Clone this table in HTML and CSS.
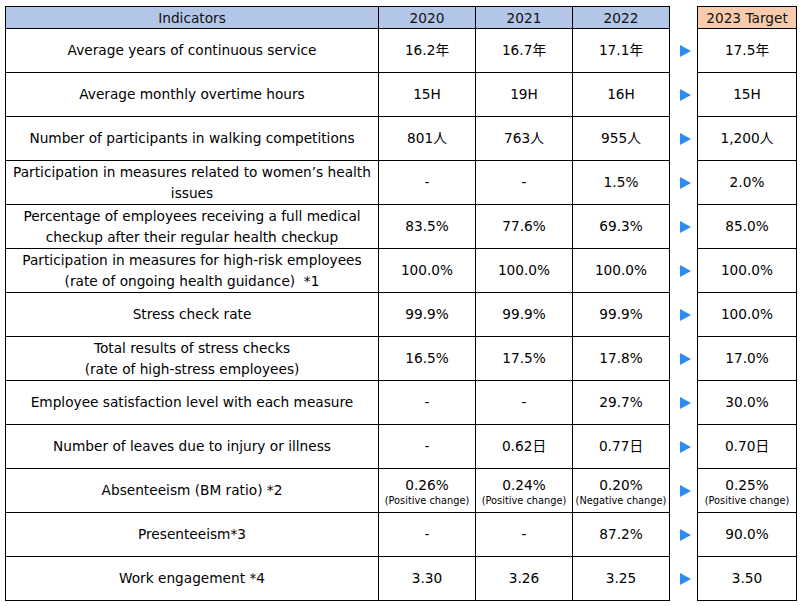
FILE: index.html
```html
<!DOCTYPE html>
<html lang="en">
<head>
<meta charset="utf-8">
<title>Health indicators</title>
<link rel="stylesheet" href="styles.css">
</head>
<body>
<table class="kpi">
  <colgroup>
    <col class="c-ind"><col class="c-yr"><col class="c-yr"><col class="c-yr"><col class="c-gap"><col class="c-tgt">
  </colgroup>
  <thead>
    <tr>
      <th class="h">Indicators</th>
      <th class="h">2020</th>
      <th class="h">2021</th>
      <th class="h">2022</th>
      <th class="gap"></th>
      <th class="h tgt">2023 Target</th>
    </tr>
  </thead>
  <tbody>
    <tr><td>Average years of continuous service</td><td>16.2年</td><td>16.7年</td><td>17.1年</td><td class="gap"><span class="arr"></span></td><td>17.5年</td></tr>
    <tr><td>Average monthly overtime hours</td><td>15H</td><td>19H</td><td>16H</td><td class="gap"><span class="arr"></span></td><td>15H</td></tr>
    <tr><td>Number of participants in walking competitions</td><td>801人</td><td>763人</td><td>955人</td><td class="gap"><span class="arr"></span></td><td>1,200人</td></tr>
    <tr><td>Participation in measures related to women’s health<br>issues</td><td>-</td><td>-</td><td>1.5%</td><td class="gap"><span class="arr"></span></td><td>2.0%</td></tr>
    <tr><td>Percentage of employees receiving a full medical<br>checkup after their regular health checkup</td><td>83.5%</td><td>77.6%</td><td>69.3%</td><td class="gap"><span class="arr"></span></td><td>85.0%</td></tr>
    <tr><td>Participation in measures for high-risk employees<br>(rate of ongoing health guidance)&nbsp; *1</td><td>100.0%</td><td>100.0%</td><td>100.0%</td><td class="gap"><span class="arr"></span></td><td>100.0%</td></tr>
    <tr><td>Stress check rate</td><td>99.9%</td><td>99.9%</td><td>99.9%</td><td class="gap"><span class="arr"></span></td><td>100.0%</td></tr>
    <tr><td>Total results of stress checks<br>(rate of high-stress employees)</td><td>16.5%</td><td>17.5%</td><td>17.8%</td><td class="gap"><span class="arr"></span></td><td>17.0%</td></tr>
    <tr><td>Employee satisfaction level with each measure</td><td>-</td><td>-</td><td>29.7%</td><td class="gap"><span class="arr"></span></td><td>30.0%</td></tr>
    <tr><td>Number of leaves due to injury or illness</td><td>-</td><td>0.62日</td><td>0.77日</td><td class="gap"><span class="arr"></span></td><td>0.70日</td></tr>
    <tr><td>Absenteeism (BM ratio) *2</td><td class="val2"><span class="big">0.26%</span><span class="sm">(Positive change)</span></td><td class="val2"><span class="big">0.24%</span><span class="sm">(Positive change)</span></td><td class="val2"><span class="big">0.20%</span><span class="sm">(Negative change)</span></td><td class="gap"><span class="arr"></span></td><td class="val2"><span class="big">0.25%</span><span class="sm">(Positive change)</span></td></tr>
    <tr><td>Presenteeism*3</td><td>-</td><td>-</td><td>87.2%</td><td class="gap"><span class="arr"></span></td><td>90.0%</td></tr>
    <tr><td>Work engagement *4</td><td>3.30</td><td>3.26</td><td>3.25</td><td class="gap"><span class="arr"></span></td><td>3.50</td></tr>
  </tbody>
</table>
</body>
</html>
```
FILE: styles.css
```css
html, body {
  background: #ffffff;
}
body {
  margin: 6px 0 0 5px;
  font-family: "DejaVu Sans", Verdana, "Noto Sans CJK JP", sans-serif;
  font-size: 13.7px;
  color: #000;
}
.kpi {
  border-collapse: collapse;
  table-layout: fixed;
  width: 791px;
}
.c-ind { width: 373px; }
.c-yr { width: 97px; }
.c-gap { width: 28px; }
.c-tgt { width: 99px; }
.kpi th, .kpi td {
  border: 1px solid #000;
  text-align: center;
  vertical-align: middle;
  padding: 0;
  line-height: 21px;
}
.kpi th {
  height: 21px;
  font-weight: normal;
  line-height: 20px;
  color: #111;
}
.kpi .h {
  background: #b4c6e7;
}
.kpi .tgt {
  background: #f8cbad;
}
.kpi td {
  height: 43px;
}
.kpi .gap {
  border-top: none;
  border-bottom: none;
  background: #fff;
}
.big {
  display: block;
  line-height: 18px;
  padding-top: 2px;
}
.sm {
  display: block;
  font-size: 9.8px;
  line-height: 14px;
  white-space: nowrap;
}
.arr {
  display: inline-block;
  width: 0;
  height: 0;
  margin-left: 3px;
  border-top: 6px solid transparent;
  border-bottom: 6px solid transparent;
  border-left: 11px solid #2b8cf2;
  vertical-align: middle;
}
```
